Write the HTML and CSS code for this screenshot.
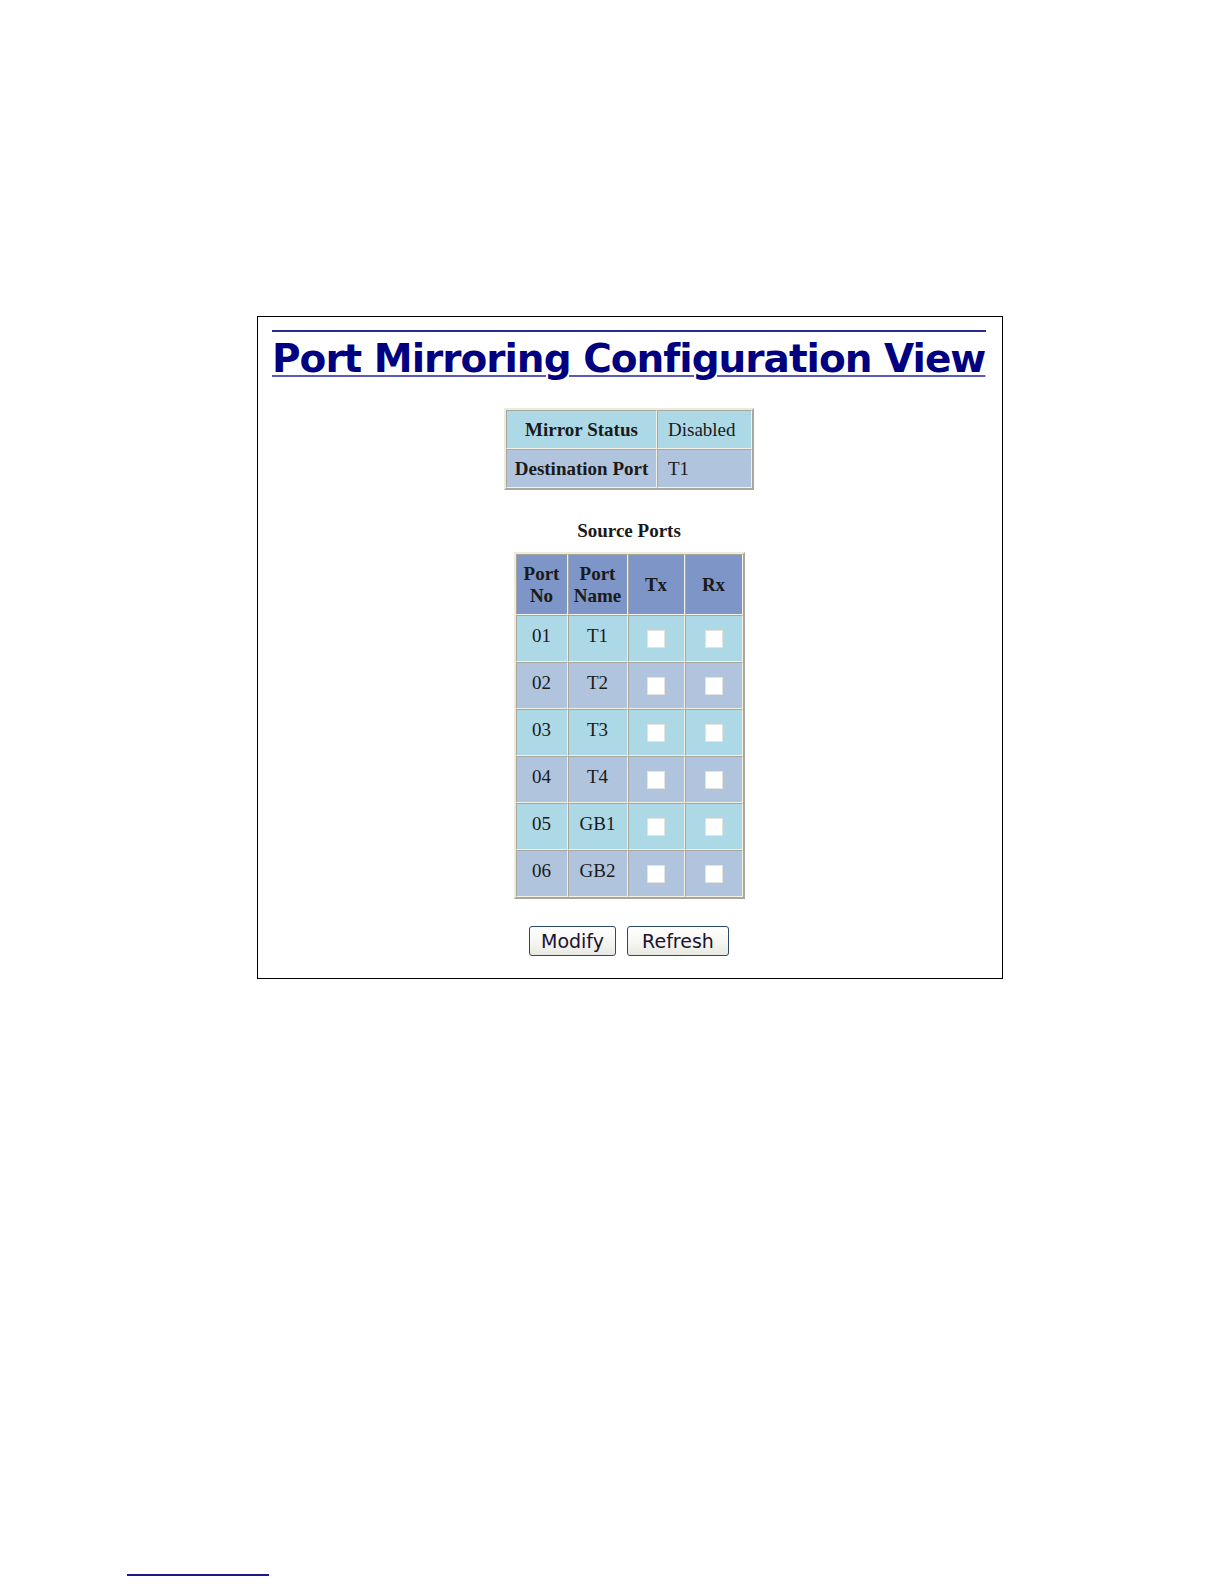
FILE: index.html
```html
<!DOCTYPE html>
<html>
<head>
<meta charset="utf-8">
<title>Port Mirroring Configuration View</title>
<link rel="stylesheet" href="styles.css">
</head>
<body>
<div class="frame">
  <h1 class="title"><span class="title-text">Port Mirroring Configuration View</span></h1>

  <table class="status">
    <tr class="row-a">
      <th class="status-label">Mirror Status</th>
      <td class="status-value">Disabled</td>
    </tr>
    <tr class="row-b">
      <th class="status-label">Destination Port</th>
      <td class="status-value">T1</td>
    </tr>
  </table>

  <div class="caption">Source Ports</div>

  <table class="ports">
    <tr class="head">
      <th class="c-no">Port<br>No</th>
      <th class="c-name">Port<br>Name</th>
      <th class="c-tx">Tx</th>
      <th class="c-rx">Rx</th>
    </tr>
    <tr class="row-a"><td>01</td><td>T1</td><td class="chk"><input type="checkbox" class="box"></td><td class="chk"><input type="checkbox" class="box"></td></tr>
    <tr class="row-b"><td>02</td><td>T2</td><td class="chk"><input type="checkbox" class="box"></td><td class="chk"><input type="checkbox" class="box"></td></tr>
    <tr class="row-a"><td>03</td><td>T3</td><td class="chk"><input type="checkbox" class="box"></td><td class="chk"><input type="checkbox" class="box"></td></tr>
    <tr class="row-b"><td>04</td><td>T4</td><td class="chk"><input type="checkbox" class="box"></td><td class="chk"><input type="checkbox" class="box"></td></tr>
    <tr class="row-a"><td>05</td><td>GB1</td><td class="chk"><input type="checkbox" class="box"></td><td class="chk"><input type="checkbox" class="box"></td></tr>
    <tr class="row-b"><td>06</td><td>GB2</td><td class="chk"><input type="checkbox" class="box"></td><td class="chk"><input type="checkbox" class="box"></td></tr>
  </table>

  <div class="actions">
    <button class="btn btn-modify" type="button">Modify</button>
    <button class="btn btn-refresh" type="button">Refresh</button>
  </div>
</div>

<div class="footer-rule"></div>
</body>
</html>
```

FILE: styles.css
```css
html, body {
  margin: 0;
  padding: 0;
  background: #ffffff;
}

body {
  font-family: "Liberation Serif", "Times New Roman", serif;
  color: #1a1a1a;
}

.frame {
  box-sizing: border-box;
  width: 746px;
  height: 663px;
  margin: 316px 0 0 257px;
  border: 1px solid #000000;
  padding: 13px 16px 0 14px;
}

.title {
  margin: 0;
  padding: 4px 0 0 0;
  border-top: 2px solid #2b2b8c;
  font-family: "DejaVu Sans", Verdana, sans-serif;
  font-weight: bold;
  font-size: 39px;
  line-height: 46px;
  color: #000080;
  white-space: nowrap;
}

.title-text {
  display: inline-block;
  letter-spacing: -1px;
  text-decoration: underline;
  text-decoration-color: #5a5ab8;
  text-decoration-thickness: 2px;
  text-underline-offset: 3px;
}

table {
  border-collapse: separate;
  border-spacing: 0;
  margin-left: auto;
  margin-right: auto;
}

.status {
  margin-top: 26px;
  border: 2px solid;
  border-color: #ecebe2 #a9a79b #a9a79b #ecebe2;
}

.status th,
.status td {
  border: 1px solid;
  border-color: #a9a79b #f3f1e6 #f3f1e6 #a9a79b;
  height: 37px;
  font-size: 19px;
  padding: 0;
}

.status .status-label {
  font-weight: bold;
  text-align: center;
  width: 149px;
}

.status .status-value {
  text-align: left;
  width: 83px;
  padding-left: 10px;
}

.row-a {
  background: #add8e6;
}

.row-b {
  background: #b0c4de;
}

.caption {
  margin-top: 30px;
  text-align: center;
  font-weight: bold;
  font-size: 19px;
  line-height: 22px;
}

.ports {
  margin-top: 10px;
  border: 2px solid;
  border-color: #ecebe2 #a9a79b #a9a79b #ecebe2;
}

.ports th,
.ports td {
  border: 1px solid;
  border-color: #a9a79b #f3f1e6 #f3f1e6 #a9a79b;
  text-align: center;
  font-size: 19px;
  padding: 0;
}

.ports .head th {
  background: #7d95c7;
  font-weight: bold;
  height: 59px;
  line-height: 22px;
}

.ports td {
  height: 47px;
  vertical-align: top;
  line-height: 20px;
  padding-top: 10px;
  box-sizing: border-box;
}

.ports td.chk {
  padding-top: 14px;
}

.ports .c-no { width: 50px; }
.ports .c-name { width: 58px; }
.ports .c-tx { width: 55px; }
.ports .c-rx { width: 56px; }

.box {
  appearance: none;
  -webkit-appearance: none;
  display: block;
  width: 18px;
  height: 18px;
  margin: 0 auto;
  background: #ffffff;
  border: 1px solid #e3e3dc;
  box-sizing: border-box;
}

.actions {
  display: flex;
  justify-content: center;
  gap: 11px;
  margin-top: 27px;
}

.btn {
  box-sizing: border-box;
  height: 30px;
  padding: 0;
  font-family: "DejaVu Sans", Tahoma, sans-serif;
  font-size: 19px;
  color: #1c1230;
  background: linear-gradient(#ffffff, #f4f4f0 60%, #e8e8e2);
  border: 1px solid #2b4a6e;
  border-radius: 3px;
}

.btn-modify { width: 87px; }
.btn-refresh { width: 102px; }

.footer-rule {
  width: 142px;
  height: 2px;
  background: #1a1a8c;
  margin: 595px 0 0 127px;
}
```
